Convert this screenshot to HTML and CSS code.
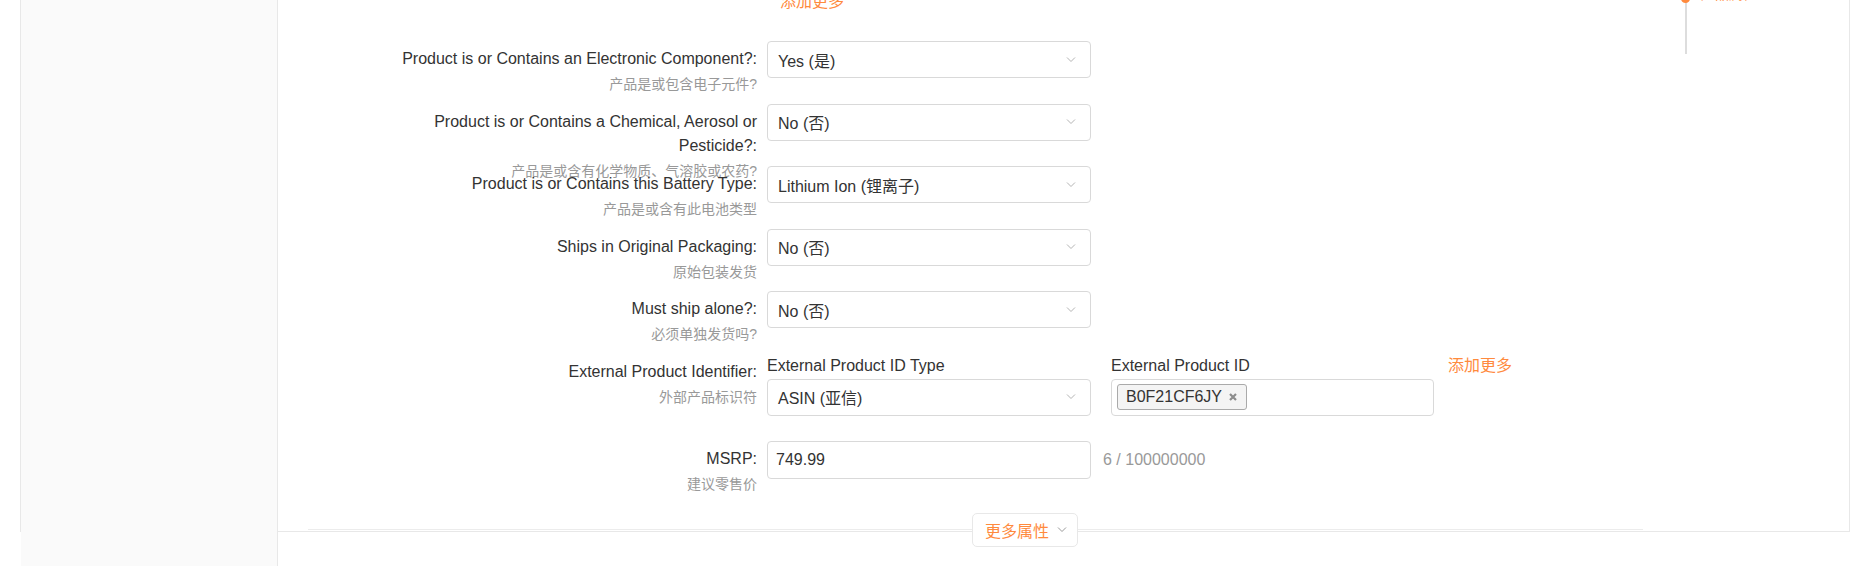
FILE: index.html
```html
<!DOCTYPE html>
<html lang="zh-CN">
<head>
<meta charset="utf-8">
<title>产品属性</title>
<link rel="stylesheet" href="styles.css">
</head>
<body>
<div class="shell">
  <div class="panel">
    <div class="side"></div>
    <div class="main">
      <!-- right-hand anchor nav -->
      <div class="anchor">
        <span class="anchor-line"></span>
        <span class="anchor-dot"></span>
        <a class="anchor-text">产品属性</a>
      </div>

      <div class="form">
        <div class="row row-top">
          <div class="label"></div>
          <div class="ctrl"><a class="link top-link">添加更多</a></div>
        </div>

        <div class="row">
          <div class="label"><p class="en">Product is or Contains an Electronic Component?:</p><p class="zh">产品是或包含电子元件?</p></div>
          <div class="ctrl">
            <div class="select"><span>Yes (是)</span><svg width="10" height="6" viewBox="0 0 10 6"><path d="M1 .5l4 4 4-4" fill="none" stroke="#b3b3b3"/></svg></div>
          </div>
        </div>

        <div class="row">
          <div class="label"><p class="en">Product is or Contains a Chemical, Aerosol or Pesticide?:</p><p class="zh">产品是或含有化学物质、气溶胶或农药?</p></div>
          <div class="ctrl">
            <div class="select"><span>No (否)</span><svg width="10" height="6" viewBox="0 0 10 6"><path d="M1 .5l4 4 4-4" fill="none" stroke="#b3b3b3"/></svg></div>
          </div>
        </div>

        <div class="row">
          <div class="label"><p class="en">Product is or Contains this Battery Type:</p><p class="zh">产品是或含有此电池类型</p></div>
          <div class="ctrl">
            <div class="select"><span>Lithium Ion (锂离子)</span><svg width="10" height="6" viewBox="0 0 10 6"><path d="M1 .5l4 4 4-4" fill="none" stroke="#b3b3b3"/></svg></div>
          </div>
        </div>

        <div class="row">
          <div class="label"><p class="en">Ships in Original Packaging:</p><p class="zh">原始包装发货</p></div>
          <div class="ctrl">
            <div class="select"><span>No (否)</span><svg width="10" height="6" viewBox="0 0 10 6"><path d="M1 .5l4 4 4-4" fill="none" stroke="#b3b3b3"/></svg></div>
          </div>
        </div>

        <div class="row">
          <div class="label"><p class="en">Must ship alone?:</p><p class="zh">必须单独发货吗?</p></div>
          <div class="ctrl">
            <div class="select"><span>No (否)</span><svg width="10" height="6" viewBox="0 0 10 6"><path d="M1 .5l4 4 4-4" fill="none" stroke="#b3b3b3"/></svg></div>
          </div>
        </div>

        <div class="row row-ext">
          <div class="label"><p class="en">External Product Identifier:</p><p class="zh">外部产品标识符</p></div>
          <div class="ctrl">
            <div class="field-col">
              <div class="field-head">External Product ID Type</div>
              <div class="select"><span>ASIN (亚信)</span><svg width="10" height="6" viewBox="0 0 10 6"><path d="M1 .5l4 4 4-4" fill="none" stroke="#b3b3b3"/></svg></div>
            </div>
            <div class="field-col field-col-2">
              <div class="field-head">External Product ID</div>
              <div class="tags"><span class="tag">B0F21CF6JY<svg class="tag-x" width="8" height="8" viewBox="0 0 8 8"><path d="M1 1l6 6M7 1L1 7" stroke="#8c8c8c" stroke-width="2.2"/></svg></span></div>
            </div>
            <a class="link ext-link">添加更多</a>
          </div>
        </div>

        <div class="row row-msrp">
          <div class="label"><p class="en">MSRP:</p><p class="zh">建议零售价</p></div>
          <div class="ctrl">
            <div class="input">749.99</div>
            <span class="count">6 / 100000000</span>
          </div>
        </div>
      </div>

      <div class="more-bar">
        <button class="more-btn">更多属性<svg width="10" height="6" viewBox="0 0 10 6"><path d="M1 .5l4 4 4-4" fill="none" stroke="#999"/></svg></button>
      </div>
    </div>
  </div>
  <div class="side-tail"></div>
</div>
</body>
</html>
```

FILE: styles.css
```css
body{margin:0; background:#fff; color:#333; font-family:"Liberation Sans","Noto Sans CJK SC",sans-serif;}

.shell{margin-left:20px; width:1830px;}
.panel{display:flex; height:532px; border-left:1px solid #e8e8e8;}
.side{width:256px; background:#fafafa; border-right:1px solid #e8e8e8;}
.side-tail{width:256px; height:34px; margin-left:1px; background:#fafafa; border-right:1px solid #e8e8e8;}
.main{flex:1; position:relative; border-right:1px solid #e8e8e8; border-bottom:1px solid #e8e8e8;}

/* anchor nav on the right */
.anchor{position:absolute; left:1403px; top:0;}
.anchor-line{position:absolute; left:4px; top:0; width:2px; height:54px; background:#ddd;}
.anchor-dot{position:absolute; left:0; top:-6px; width:9px; height:9px; border-radius:50%; background:#ff8a3d;}
.anchor-text{position:absolute; left:20px; top:-16px; font-size:14px; line-height:20px; color:#ff8a3d; white-space:nowrap;}

/* form */
.form{padding:0 30px;}
.row{display:flex; column-gap:10px; height:37px; margin-bottom:25.5px;}
.row-top{height:24px; margin-top:-10px; margin-bottom:27.3px;}
.row-ext{height:62px;}
.row-msrp{height:38px;}

.label{width:449px; padding-left:79px; box-sizing:border-box; text-align:right; flex-shrink:0;}
.label p{margin:0;}
.label .en{padding-top:6px; font-size:16px; line-height:24px; color:#333;}
.label .zh{margin-top:2px; font-size:14px; line-height:22px; color:#999;}

.ctrl{display:flex; align-items:flex-start;}
.link{color:#ff8a3d; font-size:16px; line-height:24px; cursor:pointer;}
.top-link{margin-left:13px;}

.select{box-sizing:border-box; width:324px; height:37px; padding:0 14px 0 10px; border:1px solid #d9d9d9; border-radius:4px; display:flex; align-items:center; justify-content:space-between; font-size:16px; background:#fff;}
.select svg{display:block;}

.field-col{width:324px;}
.field-col-2{width:323px; margin-left:20px;}
.field-head{font-size:16px; line-height:24px; margin-bottom:1px; color:#333;}
.ext-link{margin-left:14px;}

.tags{box-sizing:border-box; height:37px; padding:0 5px; border:1px solid #d9d9d9; border-radius:4px; display:flex; align-items:center;}
.tag{box-sizing:border-box; height:26px; padding:0 9px 0 8px; border:1px solid #aaa; border-radius:3px; background:#f4f4f4; display:inline-flex; align-items:center; font-size:16px;}
.tag-x{display:block; margin-left:7px;}

.row-msrp .ctrl{align-items:center;}
.input{box-sizing:border-box; width:324px; height:38px; padding:0 8px; border:1px solid #d9d9d9; border-radius:4px; display:flex; align-items:center; font-size:16px;}
.count{margin-left:12px; font-size:16px; color:#999;}

/* 更多属性 divider */
.more-bar{display:flex; align-items:center; height:34px; margin:33.5px 206px 0 30px;}
.more-bar:before,.more-bar:after{content:""; border-top:1px solid #ececec;}
.more-bar:before{flex:0 0 664px;}
.more-bar:after{flex:1;}
.more-btn{box-sizing:border-box; width:106px; height:34px; padding:0 0 0 12px; border:1px solid #e8e8e8; border-radius:5px; background:#fff; color:#ff8a3d; font-family:inherit; font-size:16px; display:flex; align-items:center;}
.more-btn svg{margin-left:8px;}
```
